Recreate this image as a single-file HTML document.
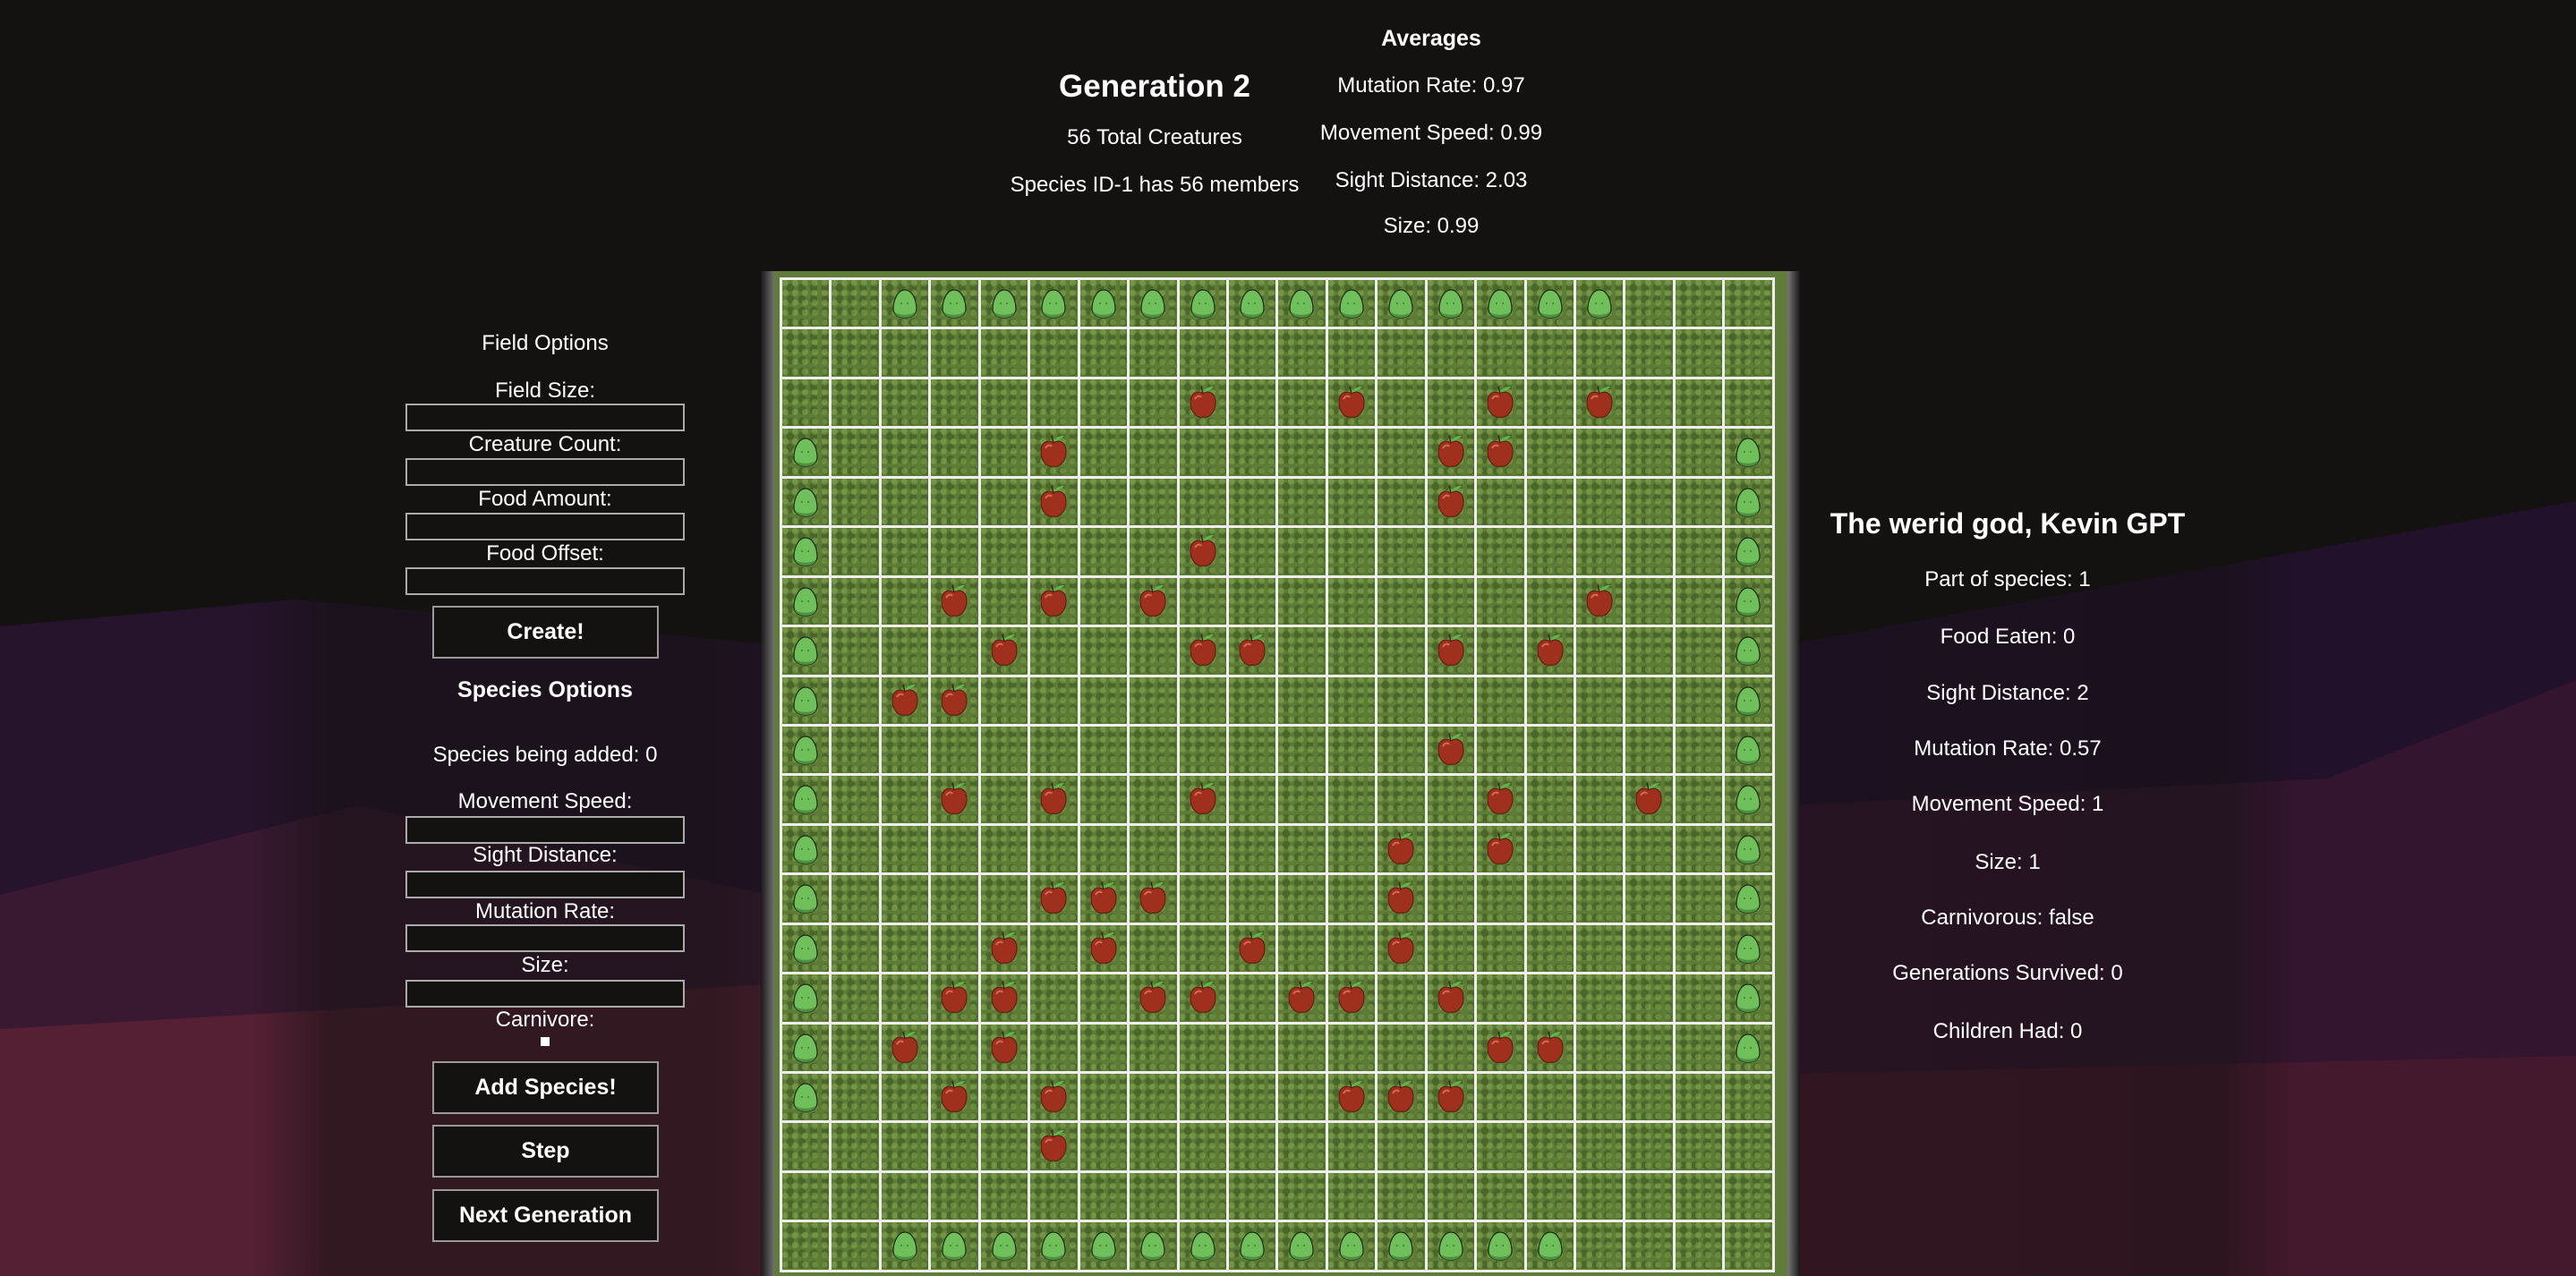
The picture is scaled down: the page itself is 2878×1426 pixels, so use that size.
<!DOCTYPE html>
<html><head><meta charset="utf-8">
<style>
*{margin:0;padding:0;box-sizing:border-box}
html,body{width:2878px;height:1426px;overflow:hidden;background:#141111}
body{position:relative;font-family:"Liberation Sans",sans-serif;color:#fff}
.bg{position:absolute;left:0;top:0}
.band{position:absolute;top:0;height:1426px}
.t{position:absolute;transform:translateX(-50%);white-space:nowrap;text-align:center;line-height:1}
.l{font-size:24px}
.h{font-weight:bold}
.inp{position:absolute;left:453px;width:312px;height:31px;border:2px solid #aaa;background:#141111}
.btn{position:absolute;left:483px;width:253px;height:59px;border:2px solid #999;background:#141111;font-weight:bold;font-size:25px;display:flex;align-items:center;justify-content:center}
#frame{position:absolute;left:865px;top:303px;width:1132px;height:1130px;background:#5f7d39}
#grid{position:absolute;left:871px;top:310px;width:1112px;background:#eee;display:grid;grid-template-columns:repeat(20,52.45px);grid-auto-rows:52.45px;gap:3px;padding:3px}
.c{background:#5d7c36;background-image:radial-gradient(circle at 30% 30%,rgba(150,190,90,.4) 0 3px,transparent 4px),radial-gradient(circle at 70% 65%,rgba(40,60,20,.35) 0 4px,transparent 5px);background-size:11px 11px,13px 13px;position:relative}
.c svg{position:absolute;left:0;top:0}
</style></head><body>
<svg class="bg" width="2878" height="1426">
<polygon points="0,700 330,670 860,720 860,1426 0,1426" fill="#26132c"/>
<polygon points="0,1000 400,900 860,1000 860,1426 0,1426" fill="#381931"/>
<polygon points="0,1150 860,1100 860,1426 0,1426" fill="#552034"/>
<polygon points="2000,720 2878,560 2878,1426 2000,1426" fill="#22112a"/>
<polygon points="2000,900 2600,870 2878,760 2878,1426 2000,1426" fill="#33152f"/>
<polygon points="2000,1200 2878,1180 2878,1426 2000,1426" fill="#45192d"/>
</svg>
<div class="band" style="left:280px;width:600px;background:linear-gradient(90deg,rgba(20,17,17,0),rgba(20,17,17,.55) 15%,rgba(20,17,17,.55) 85%,rgba(20,17,17,.3))"></div>
<div class="band" style="left:1990px;width:580px;background:linear-gradient(90deg,rgba(20,17,17,.4),rgba(20,17,17,.5) 85%,rgba(20,17,17,0))"></div>
<div style="position:absolute;left:850px;top:303px;width:16px;height:1123px;background:linear-gradient(90deg,#1a1818,#777)"></div>
<div style="position:absolute;left:1997px;top:303px;width:14px;height:1123px;background:linear-gradient(90deg,#777,#1a1818)"></div>

<div class="t h" style="left:1290px;top:79px;font-size:35px">Generation 2</div>
<div class="t l" style="left:1290px;top:142px">56 Total Creatures</div>
<div class="t l" style="left:1290px;top:195px">Species ID-1 has 56 members</div>
<div class="t h" style="left:1599px;top:31px;font-size:25px">Averages</div>
<div class="t l" style="left:1599px;top:84px">Mutation Rate: 0.97</div>
<div class="t l" style="left:1599px;top:137px">Movement Speed: 0.99</div>
<div class="t l" style="left:1599px;top:190px">Sight Distance: 2.03</div>
<div class="t l" style="left:1599px;top:241px">Size: 0.99</div>

<div class="t l" style="left:609px;top:372px">Field Options</div>
<div class="t l" style="left:609px;top:425px">Field Size:</div>
<div class="inp" style="top:451px"></div>
<div class="t l" style="left:609px;top:485px">Creature Count:</div>
<div class="inp" style="top:512px"></div>
<div class="t l" style="left:609px;top:546px">Food Amount:</div>
<div class="inp" style="top:573px"></div>
<div class="t l" style="left:609px;top:607px">Food Offset:</div>
<div class="inp" style="top:634px"></div>
<div class="btn" style="top:677px">Create!</div>
<div class="t h" style="left:609px;top:759px;font-size:25px">Species Options</div>
<div class="t l" style="left:609px;top:832px">Species being added: 0</div>
<div class="t l" style="left:609px;top:884px">Movement Speed:</div>
<div class="inp" style="top:912px"></div>
<div class="t l" style="left:609px;top:944px">Sight Distance:</div>
<div class="inp" style="top:973px"></div>
<div class="t l" style="left:609px;top:1007px">Mutation Rate:</div>
<div class="inp" style="top:1033px"></div>
<div class="t l" style="left:609px;top:1067px">Size:</div>
<div class="inp" style="top:1095px"></div>
<div class="t l" style="left:609px;top:1128px">Carnivore:</div>
<div style="position:absolute;left:604px;top:1159px;width:10px;height:10px;background:#fff"></div>
<div class="btn" style="top:1186px">Add Species!</div>
<div class="btn" style="top:1257px">Step</div>
<div class="btn" style="top:1329px">Next Generation</div>

<div class="t h" style="left:2243px;top:569px;font-size:32px">The werid god, Kevin GPT</div>
<div class="t l" style="left:2243px;top:636px">Part of species: 1</div>
<div class="t l" style="left:2243px;top:700px">Food Eaten: 0</div>
<div class="t l" style="left:2243px;top:763px">Sight Distance: 2</div>
<div class="t l" style="left:2243px;top:825px">Mutation Rate: 0.57</div>
<div class="t l" style="left:2243px;top:887px">Movement Speed: 1</div>
<div class="t l" style="left:2243px;top:952px">Size: 1</div>
<div class="t l" style="left:2243px;top:1014px">Carnivorous: false</div>
<div class="t l" style="left:2243px;top:1076px">Generations Survived: 0</div>
<div class="t l" style="left:2243px;top:1141px">Children Had: 0</div>

<div id="frame"></div>
<div id="grid"></div>
<script>
var C='<svg width="52" height="52" viewBox="0 0 52 52"><path d="M26 11C17 11 13 24 13 32C13 39 19 42 26 42C33 42 39 39 39 32C39 24 35 11 26 11Z" fill="#6fbf5a" stroke="#1d2a14" stroke-width="1.2"/><path d="M14 35C18 40 34 40 38 35C37 40 32 42 26 42C20 42 15 40 14 35Z" fill="#4d9142"/><circle cx="22" cy="26" r="1" fill="#3f7a35"/><circle cx="29" cy="26" r="1" fill="#3f7a35"/></svg>';
var A='<svg width="52" height="52" viewBox="0 0 52 52"><path d="M26 16C21 12 12 14 12 26C12 36 19 44 26 42C33 44 40 36 40 26C40 14 31 12 26 16Z" fill="#a0301e" stroke="#5a1a10" stroke-width="1"/><path d="M17 22C19 18 23 18 24 20" stroke="#d86a50" stroke-width="2" fill="none"/><path d="M26 16L24 8" stroke="#3a2a10" stroke-width="1.5"/><path d="M26 14C30 8 36 8 38 8C35 12 31 14 26 14Z" fill="#5cb84a"/></svg>';
var ap={2:[8,11,14,16],3:[5,13,14],4:[5,13],5:[8],6:[3,5,7,16],7:[4,8,9,13,15],8:[2,3],9:[13],10:[3,5,8,14,17],11:[12,14],12:[5,6,7,12],13:[4,6,9,12],14:[3,4,7,8,10,11,13],15:[2,4,14,15],16:[3,5,11,12,13],17:[5]};
var h='';
for(var r=0;r<20;r++)for(var c=0;c<20;c++){
var x='';
if((r==0&&c>=2&&c<=16)||(r==19&&c>=2&&c<=15)||(c==0&&r>=3&&r<=16)||(c==19&&r>=3&&r<=15))x=C;
else if(ap[r]&&ap[r].indexOf(c)>=0)x=A;
h+='<div class="c">'+x+'</div>';}
document.getElementById('grid').innerHTML=h;
</script>
</body></html>
